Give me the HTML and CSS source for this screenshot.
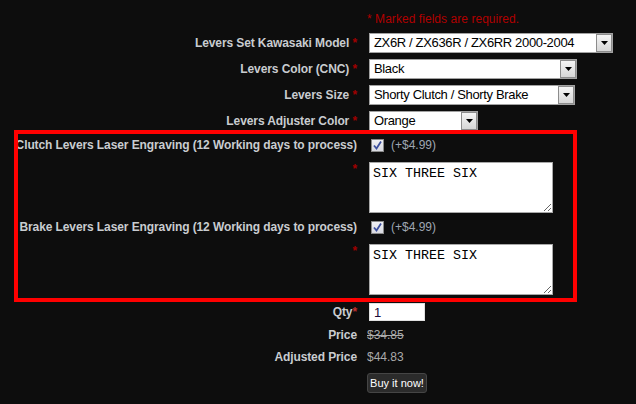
FILE: index.html
```html
<!DOCTYPE html>
<html>
<head>
<meta charset="utf-8">
<link rel="stylesheet" href="styles.css">
</head>
<body>
<div class="page">
  <div class="form">
    <div class="label"></div>
    <div class="value note-row"><span class="note">* Marked fields are required.</span></div>

    <div class="label">Levers Set Kawasaki Model <span class="req">*</span></div>
    <div class="value">
      <div class="select w-model"><span class="sel-text">ZX6R / ZX636R / ZX6RR 2000-2004</span><span class="sel-btn"><svg width="7" height="4" viewBox="0 0 7 4"><polygon points="0,0 7,0 3.5,4" fill="#000"/></svg></span></div>
    </div>

    <div class="label">Levers Color (CNC) <span class="req">*</span></div>
    <div class="value">
      <div class="select w-color"><span class="sel-text">Black</span><span class="sel-btn"><svg width="7" height="4" viewBox="0 0 7 4"><polygon points="0,0 7,0 3.5,4" fill="#000"/></svg></span></div>
    </div>

    <div class="label">Levers Size <span class="req">*</span></div>
    <div class="value">
      <div class="select w-size"><span class="sel-text">Shorty Clutch / Shorty Brake</span><span class="sel-btn"><svg width="7" height="4" viewBox="0 0 7 4"><polygon points="0,0 7,0 3.5,4" fill="#000"/></svg></span></div>
    </div>

    <div class="label">Levers Adjuster Color <span class="req">*</span></div>
    <div class="value">
      <div class="select w-adj"><span class="sel-text">Orange</span><span class="sel-btn"><svg width="7" height="4" viewBox="0 0 7 4"><polygon points="0,0 7,0 3.5,4" fill="#000"/></svg></span></div>
    </div>

    <div class="label check-label">Clutch Levers Laser Engraving (12 Working days to process)</div>
    <div class="value check-row">
      <span class="checkbox"><svg width="11" height="11" viewBox="0 0 11 11"><path d="M2 5.5 L4.5 8.5 L9 1.5" fill="none" stroke="#3c4f9e" stroke-width="1.8"/></svg></span>
      <span class="addon">(+$4.99)</span>
    </div>

    <div class="label ta-label"><span class="req">*</span></div>
    <div class="value ta-row"><textarea class="engrave">SIX THREE SIX</textarea></div>

    <div class="label check-label">Brake Levers Laser Engraving (12 Working days to process)</div>
    <div class="value check-row">
      <span class="checkbox"><svg width="11" height="11" viewBox="0 0 11 11"><path d="M2 5.5 L4.5 8.5 L9 1.5" fill="none" stroke="#3c4f9e" stroke-width="1.8"/></svg></span>
      <span class="addon">(+$4.99)</span>
    </div>

    <div class="label ta-label"><span class="req">*</span></div>
    <div class="value ta-row"><textarea class="engrave">SIX THREE SIX</textarea></div>

    <div class="label qty-label">Qty<span class="req-light">*</span></div>
    <div class="value qty-row"><input class="qty" type="text" value="1"></div>

    <div class="label">Price</div>
    <div class="value text-row"><span class="old-price">$34.85</span></div>

    <div class="label">Adjusted Price</div>
    <div class="value text-row"><span class="price">$44.83</span></div>

    <div class="label"></div>
    <div class="value btn-row"><button class="buy">Buy it now!</button></div>
  </div>
  <div class="highlight"></div>
</div>
</body>
</html>
```

FILE: styles.css
```css
html, body {
  margin: 0;
  padding: 0;
  background: #0d0d0d;
}

body {
  font-family: "Liberation Sans", Arial, sans-serif;
  font-size: 12px;
  width: 636px;
  height: 404px;
  overflow: hidden;
}

.page {
  position: relative;
  padding-top: 10px;
}

.form {
  display: grid;
  grid-template-columns: 357px 1fr;
  column-gap: 10px;
  row-gap: 6px;
  align-items: center;
}

.label {
  text-align: right;
  font-weight: bold;
  color: #c9ccd0;
  white-space: nowrap;
  line-height: 14px;
  letter-spacing: -0.1px;
}

.value {
  display: flex;
  align-items: center;
}

.note-row {
  height: 17px;
}

.note {
  color: #b00000;
  font-size: 12px;
  letter-spacing: 0.05px;
}

.req {
  color: #a00000;
}

.req-light {
  color: #c03030;
}

.select {
  box-sizing: border-box;
  height: 20px;
  margin-left: 2px;
  border: 1px solid #a2a2a2;
  background: #fff;
  display: flex;
  align-items: stretch;
}

.w-model { width: 244px; }
.w-color { width: 208px; }
.w-size { width: 206px; }
.w-adj { width: 109px; }

.sel-text {
  flex: 1;
  padding-left: 4px;
  font-size: 13px;
  letter-spacing: -0.35px;
  color: #000;
  line-height: 18px;
  white-space: nowrap;
  overflow: hidden;
}

.sel-btn {
  box-sizing: border-box;
  width: 16px;
  border: 1px solid #8c8c8c;
  background: linear-gradient(#f4f4f4, #d6d6d6);
  display: flex;
  align-items: center;
  justify-content: center;
}

.check-row {
  height: 16px;
}

.checkbox {
  box-sizing: border-box;
  width: 13px;
  height: 13px;
  margin-left: 4px;
  border: 1px solid #8a8a8a;
  background: linear-gradient(#f0f0f4, #d8d9e0);
  display: flex;
  align-items: center;
  justify-content: center;
}

.addon {
  margin-left: 7px;
  color: #9ea6b2;
  font-size: 12px;
}

.ta-label {
  align-self: start;
  padding-top: 3px;
}

.ta-row {
  padding-top: 3px;
}

.engrave {
  box-sizing: border-box;
  width: 184px;
  height: 51px;
  margin: 0 0 0 2px;
  padding: 3px 3px;
  border: 1px solid #a8a8a8;
  background: #fff;
  font-family: "Liberation Mono", "Courier New", monospace;
  font-size: 13.33px;
  color: #000;
}

.qty-label {
  padding-top: 2px;
}

.qty-row {
  padding-top: 2px;
}

.qty {
  box-sizing: border-box;
  width: 56px;
  height: 18px;
  margin: 0 0 0 2px;
  padding: 0 4px;
  border: 1px solid #e0e0e0;
  background: #fff;
  font-family: "Liberation Sans", Arial, sans-serif;
  font-size: 13px;
  color: #1a0a3a;
}

.text-row {
  height: 16px;
}

.old-price {
  color: #aaaaaa;
  text-decoration: line-through;
}

.price {
  color: #aaaaaa;
}

.btn-row {
  padding-top: 2px;
}

.buy {
  box-sizing: border-box;
  width: 60px;
  height: 20px;
  padding: 0;
  border: 1px solid #454545;
  border-radius: 3px;
  background: #2b2b2b;
  color: #ffffff;
  font-family: "Liberation Sans", Arial, sans-serif;
  font-size: 11px;
  white-space: nowrap;
}

.highlight {
  position: absolute;
  left: 14px;
  top: 130px;
  width: 563px;
  height: 172px;
  box-sizing: border-box;
  border: 4px solid #ff0000;
  pointer-events: none;
}
```
